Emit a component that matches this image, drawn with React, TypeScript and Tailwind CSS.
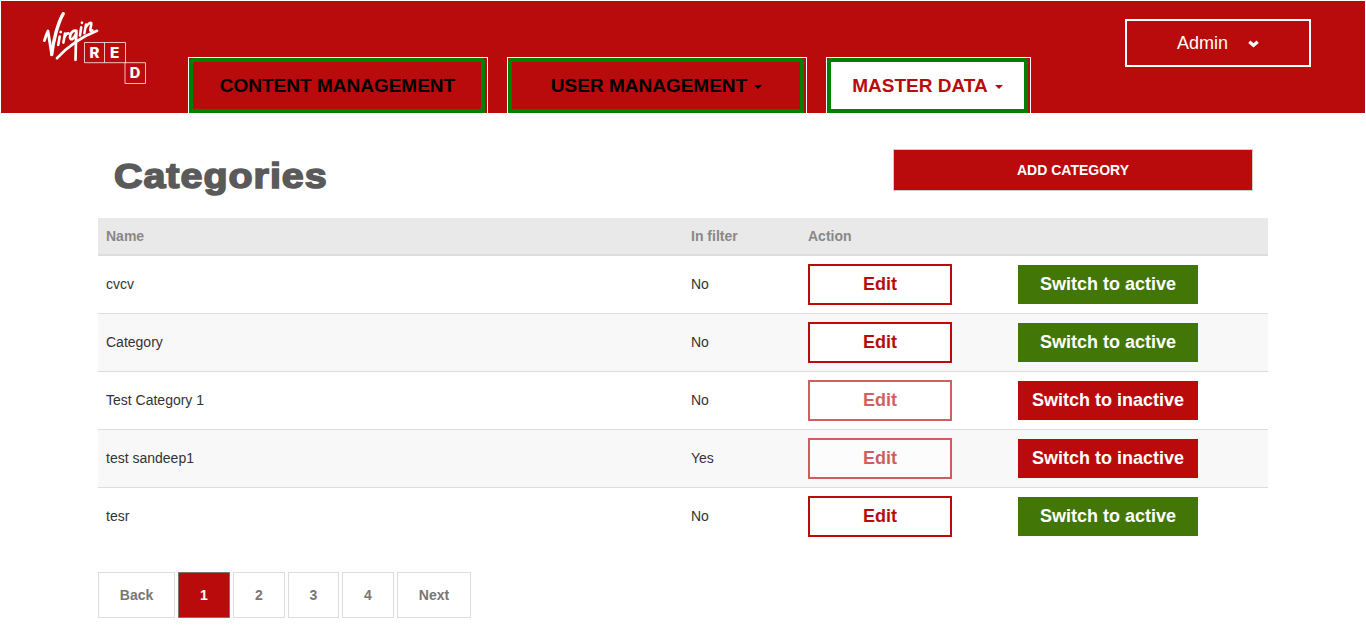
import React from "react";

type Category = { name: string; inFilter: string; active: boolean };

const categories: Category[] = [
  { name: "cvcv", inFilter: "No", active: false },
  { name: "Category", inFilter: "No", active: false },
  { name: "Test Category 1", inFilter: "No", active: true },
  { name: "test sandeep1", inFilter: "Yes", active: true },
  { name: "tesr", inFilter: "No", active: false },
];

function Logo() {
  return (
    <svg className="block h-[76px] w-[108px]" viewBox="40 10 108 76" fill="none" aria-label="Virgin Red">
      <g stroke="#fff" strokeLinecap="round" strokeLinejoin="round">
        <path d="M44.4 40.6 C45.5 37 47 33 48 31 L51.6 54" strokeWidth="2.8" />
        <path d="M51.7 54.6 C53 42 58 22 63.2 13.8" strokeWidth="3.4" />
        <path d="M59.7 36.6 L58.2 45" strokeWidth="2.6" />
        <path d="M60.6 32.2 L60.8 32" strokeWidth="2.6" />
        <path d="M65 33.6 L63.4 42.6 M64.4 37.5 C65.4 34.6 66.8 33.2 68.6 33.4" strokeWidth="2.6" />
        <path d="M76.4 30.8 C72.8 29.6 69.8 33.8 70 37.4 C70.4 41.4 75 38.6 76.5 32 C75.8 40 75.8 50 75.5 59.8" strokeWidth="2.7" />
        <path d="M81.2 27.4 L80 35.4" strokeWidth="2.6" />
        <path d="M81.9 22.8 L82 22.6" strokeWidth="2.6" />
        <path d="M86 24.6 L84.4 33.2 M85.4 28 C87.6 23.6 91.6 21 91.4 24 L90.2 29.8 C90.2 31.4 91.4 31 92.4 30.4" strokeWidth="2.5" />
        <path d="M57 58.2 C66 48.5 80 37.5 97 30.8" strokeWidth="2.7" />
      </g>
      <g stroke="#fff" strokeOpacity=".75" strokeWidth="1">
        <path d="M84.5 42.5H125.5V62.7H84.5ZM104.5 42.5V62.7M125 62.7H145.5V83.5H125Z" />
      </g>
      <g fill="#fff" className="font-['Inter',sans-serif] text-[14px] font-extrabold">
        <text x="89.5" y="58.2" textLength="10" lengthAdjust="spacingAndGlyphs">R</text>
        <text x="110" y="58.2" textLength="9.4" lengthAdjust="spacingAndGlyphs">E</text>
        <text x="129.8" y="78.4" textLength="10.6" lengthAdjust="spacingAndGlyphs">D</text>
      </g>
    </svg>
  );
}

function Caret({ className }: { className: string }) {
  return (
    <span className={`mt-[2px] ml-[7px] h-0 w-0 border-x-4 border-t-4 border-x-transparent ${className}`} />
  );
}

function NavTab({ label, caret, active, className }: { label: string; caret?: boolean; active?: boolean; className: string }) {
  return (
    <div className={`flex h-[56px] border border-b-0 border-white pr-[2px] ${className}`}>
      <a
        className={`flex flex-1 items-center justify-center rounded-t-[4px] border-4 border-[#008000] text-[19px] leading-6 font-bold whitespace-nowrap ${
          active ? "bg-white text-[#b90b0b]" : "pl-px text-black"
        }`}
      >
        {label}
        {caret && <Caret className={active ? "border-t-[#b90b0b]" : "border-t-black"} />}
      </a>
    </div>
  );
}

function PageLink({ label, current, className }: { label: string; current?: boolean; className: string }) {
  return (
    <a
      className={`flex h-[46px] items-center justify-center border text-[14px] font-bold ${
        current ? "border-[#777] bg-[#b90b0b] text-white" : "border-[#ddd] text-[#777]"
      } ${className}`}
    >
      {label}
    </a>
  );
}

export default function App() {
  return (
    <div className="h-[633px] overflow-hidden bg-white px-px pt-px font-['Liberation_Sans',Arial,sans-serif]">
      <header className="flex h-[112px] bg-[#b90b0b]">
        <div className="w-[187px] pt-[9px] pl-[39px]">
          <Logo />
        </div>
        <nav className="flex items-end">
          <NavTab label="CONTENT MANAGEMENT" className="w-[300px]" />
          <NavTab label="USER MANAGEMENT" caret className="ml-[19px] w-[300px]" />
          <NavTab label="MASTER DATA" caret active className="ml-[19px] w-[205px]" />
        </nav>
        <button className="mt-[18px] mr-[54px] ml-auto flex h-[48px] w-[186px] items-center justify-center border-2 border-white text-[18px] text-white">
          Admin
          <svg className="mt-[2px] ml-[20px] h-2 w-[11px]" viewBox="0 0 11 8" fill="none">
            <path d="M1.3 1.8L5.5 5.4L9.7 1.8" stroke="#fff" strokeWidth="3.2" />
          </svg>
        </button>
      </header>

      <main className="ml-[97px] w-[1170px]">
        <div className="flex h-[105px] items-start justify-between pr-[15px] pl-[15px]">
          <h1 className="mt-[41px] ml-px origin-left scale-x-[1.11] text-[35.5px] leading-[44px] font-bold tracking-[0.9px] text-[#5a5a5a] [-webkit-text-stroke:1.6px_#5a5a5a]">
            Categories
          </h1>
          <button className="mt-[36px] h-[42px] w-[360px] border border-[#ccc] bg-[#b90b0b] text-[14px] font-bold text-white">
            ADD CATEGORY
          </button>
        </div>

        <table className="w-full table-fixed border-separate border-spacing-0 text-left text-[14px] text-[#333]">
          <colgroup>
            <col className="w-[585px]" />
            <col className="w-[117px]" />
            <col className="w-[210px]" />
            <col />
          </colgroup>
          <thead>
            <tr className="h-[38px] bg-[#e9e9e9] text-[#888]">
              <th className="border-b-2 border-[#ddd] px-2 py-0 font-bold">Name</th>
              <th className="border-b-2 border-[#ddd] px-2 py-0 font-bold">In filter</th>
              <th className="border-b-2 border-[#ddd] px-2 py-0 font-bold">Action</th>
              <th className="border-b-2 border-[#ddd]" />
            </tr>
          </thead>
          <tbody className="[&>tr:last-child>td]:border-b-transparent [&>tr:nth-child(even)]:bg-[#f8f8f8] [&>tr>td]:border-b [&>tr>td]:border-[#ddd]">
            {categories.map((c) => (
              <tr key={c.name} className="h-[58px]">
                <td className="px-2 py-0">{c.name}</td>
                <td className="px-2 py-0">{c.inFilter}</td>
                <td className="px-2 py-0">
                  <button
                    className={`block h-[41px] w-[144px] border-2 border-[#b90b0b] bg-white pb-[2px] text-[18px] leading-6 font-bold text-[#b90b0b] ${
                      c.active ? "opacity-65" : ""
                    }`}
                  >
                    Edit
                  </button>
                </td>
                <td className="px-2 py-0">
                  <button
                    className={`block h-[39px] w-[180px] pb-[2px] text-[18px] leading-6 font-bold whitespace-nowrap text-white ${
                      c.active ? "bg-[#b90b0b]" : "bg-[#427707]"
                    }`}
                  >
                    {c.active ? "Switch to inactive" : "Switch to active"}
                  </button>
                </td>
              </tr>
            ))}
          </tbody>
        </table>

        <div className="mt-[26px] flex gap-[3px]">
          <PageLink label="Back" className="w-[77px]" />
          <PageLink label="1" current className="w-[52px]" />
          <PageLink label="2" className="w-[52px]" />
          <PageLink label="3" className="w-[51px]" />
          <PageLink label="4" className="w-[52px]" />
          <PageLink label="Next" className="w-[74px]" />
        </div>
      </main>
    </div>
  );
}
